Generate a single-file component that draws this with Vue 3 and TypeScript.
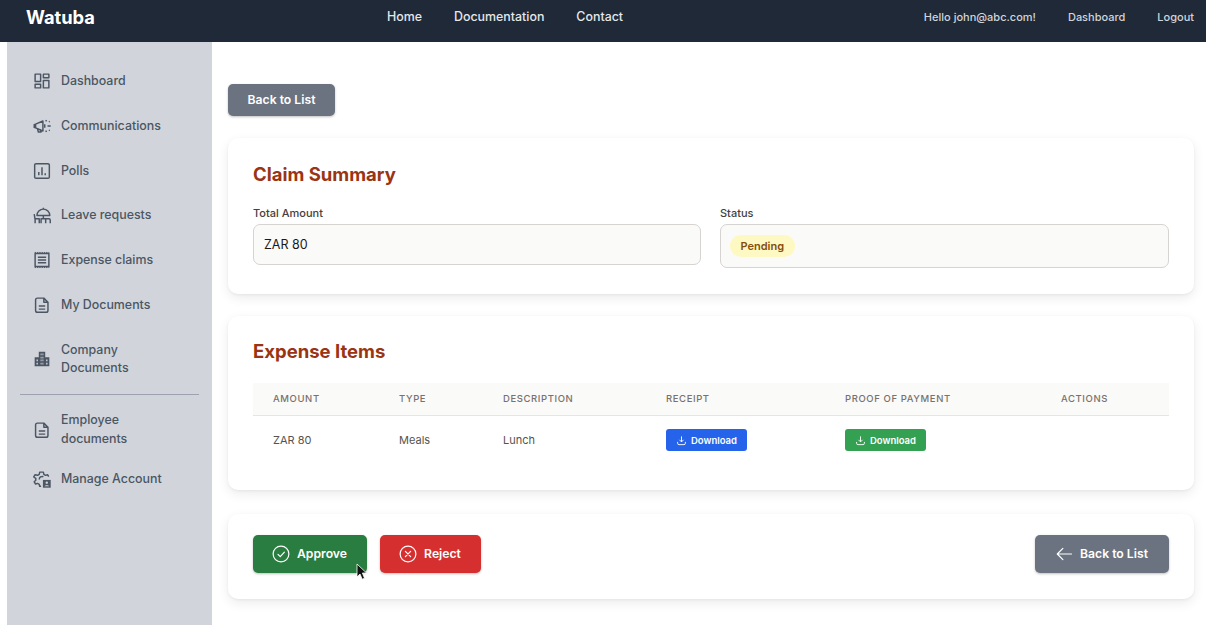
<script setup lang="ts">
const headers: string[] = ['Amount', 'Type', 'Description', 'Receipt', 'Proof of Payment', 'Actions']
</script>

<template>
  <div class="page">
    <header class="topbar">
      <div class="brand">Watuba</div>
      <nav class="mainnav">
        <a>Home</a>
        <a>Documentation</a>
        <a>Contact</a>
      </nav>
      <div class="usernav">
        <span>Hello john@abc.com!</span>
        <a>Dashboard</a>
        <a>Logout</a>
      </div>
    </header>

    <div class="body">
      <aside class="sidebar">
        <a class="item">
          <svg class="ico" viewBox="0 0 24 24"><path d="M4.500 4.500h6v8h-6zM4.500 15.500h6v4h-6zM13.500 4.500h6v4h-6zM13.500 11.500h6v8h-6z" /></svg>
          <span>Dashboard</span>
        </a>
        <a class="item">
          <svg class="ico" viewBox="0 0 24 24"><path d="M3.500 10.500v3l1.500.5v-4zM5 10l8-3.500v11L5 14zM7 14.500l1 4h3l-1-3" /><path d="M15 10v4M17 5.500l-1 1.500M18 12h3.500M17 18.500l-1-1.500M20.500 7l-1 .5M20.500 17l-1-.5" /></svg>
          <span>Communications</span>
        </a>
        <a class="item">
          <svg class="ico" viewBox="0 0 24 24"><rect x="4" y="4" width="16" height="16" rx="1.500" /><path d="M8.500 16.500v-3.500M12 16.500V8M15.500 16.500v-2" /></svg>
          <span>Polls</span>
        </a>
        <a class="item">
          <svg class="ico" viewBox="0 0 24 24"><path d="M6.500 11.500a7 7 0 0 1 14 0zM13.500 3v1.500M13.500 11.500v3" /><path d="M3.500 10l1 6v4M4.500 15h4.500v5M11 20v-5h7M18 15h1.500a1.500 1.500 0 0 1 1.500 1.500V20M16 15v5" /></svg>
          <span>Leave requests</span>
        </a>
        <a class="item">
          <svg class="ico" viewBox="0 0 24 24"><path d="M4.500 5h15v14h-15zM7.500 9h9M7.500 12h9M7.500 15h9" /><path class="dash" d="M4 3.800h16M4 20.200h16" /></svg>
          <span>Expense claims</span>
        </a>
        <a class="item">
          <svg class="ico" viewBox="0 0 24 24"><path d="M7 4.500h7l4.500 4.500v9a2 2 0 0 1-2 2H7a2 2 0 0 1-2-2V6.500a2 2 0 0 1 2-2zM14 4.500V9h4.500M8.500 13h7M8.500 16.500h7" /></svg>
          <span>My Documents</span>
        </a>
        <a class="item">
          <svg class="ico" viewBox="0 0 24 24"><path class="solid" d="M8.500 4h7v6h4.500v10H4V10h4.500zM10.500 6v2h1v-2zM12.500 6v2h1v-2zM10.500 9.500v2h1v-2zM12.500 9.500v2h1v-2zM6 12.500v2h1.500v-2zM10.500 12.500v2h1v-2zM12.500 12.500v2h1v-2zM16.500 12.500v2H18v-2zM6 16v2h1.500v-2zM10.500 16v2h1v-2zM12.500 16v2h1v-2zM16.500 16v2H18v-2z" /></svg>
          <span>Company<br />Documents</span>
        </a>
        <div class="divider"></div>
        <a class="item low">
          <svg class="ico" viewBox="0 0 24 24"><path d="M7 4.500h7l4.500 4.500v9a2 2 0 0 1-2 2H7a2 2 0 0 1-2-2V6.500a2 2 0 0 1 2-2zM14 4.500V9h4.500M8.500 13h7M8.500 16.500h7" /></svg>
          <span>Employee<br />documents</span>
        </a>
        <a class="item low">
          <svg class="ico" viewBox="0 0 24 24"><path d="M11 20H9.500l-.5-2.200-1.800-1-2.200.7-1.500-2.500 1.700-1.600v-2L3 9.800l1.500-2.500 2.700.7 1.800-1 .5-2.500h4l.5 2.500 1.800 1 2.200-.7 1.300 2.200" /><path d="M9 12.500a3.200 3.200 0 0 1 4.500-3" /><path class="solid" d="M13 13h8.500v8.500H13z" /><circle class="hole" cx="17.200" cy="16" r="1.300" /><path class="hole" d="M14.800 20c.4-1.600 4.400-1.600 4.800 0z" /></svg>
          <span>Manage Account</span>
        </a>
      </aside>

      <main class="content">
        <div class="topaction">
          <button class="btn gray top">Back to List</button>
        </div>

        <section class="card summary">
          <h2>Claim Summary</h2>
          <div class="fields">
            <div class="field">
              <label>Total Amount</label>
              <div class="input amount">ZAR 80</div>
            </div>
            <div class="field">
              <label>Status</label>
              <div class="input status"><span class="badge">Pending</span></div>
            </div>
          </div>
        </section>

        <section class="card items">
          <h2>Expense Items</h2>
          <table>
            <thead>
              <tr>
                <th v-for="h in headers" :key="h">{{ h }}</th>
              </tr>
            </thead>
            <tbody>
              <tr>
                <td>ZAR 80</td>
                <td>Meals</td>
                <td>Lunch</td>
                <td>
                  <a class="dl blue">
                    <svg viewBox="0 0 24 24"><path d="M12 3v12M7.500 10.500l4.500 4.500 4.500-4.500M3.500 15v3a3 3 0 0 0 3 3h11a3 3 0 0 0 3-3v-3" /></svg>
                    Download
                  </a>
                </td>
                <td>
                  <a class="dl green">
                    <svg viewBox="0 0 24 24"><path d="M12 3v12M7.500 10.500l4.500 4.500 4.500-4.500M3.500 15v3a3 3 0 0 0 3 3h11a3 3 0 0 0 3-3v-3" /></svg>
                    Download
                  </a>
                </td>
                <td></td>
              </tr>
            </tbody>
          </table>
        </section>

        <section class="card actions">
          <div class="left">
            <button class="btn big approve">
              <svg viewBox="0 0 24 24"><circle cx="12" cy="12" r="10.500" /><path d="M8 12.500l3 3 5.500-6" /></svg>
              Approve
            </button>
            <button class="btn big reject">
              <svg viewBox="0 0 24 24"><circle cx="12" cy="12" r="10.500" /><path d="M8.500 8.500l7 7M15.500 8.500l-7 7" /></svg>
              Reject
            </button>
          </div>
          <button class="btn big gray back">
            <svg viewBox="0 0 24 24"><path d="M22 12H3M10.500 4.500L3 12l7.500 7.500" /></svg>
            Back to List
          </button>
        </section>
      </main>
    </div>

    <svg class="cursor" viewBox="0 0 12 18"><path d="M1 1v13l3-3 2.200 5.200 2.300-1L6.400 10H10.500z" /></svg>
  </div>
</template>

<style>
html, body { margin: 0; background: #fff; }
</style>

<style scoped>
.page {
  position: relative;
  width: 1206px;
  height: 625px;
  overflow: hidden;
  font-family: Inter, "Liberation Sans", sans-serif;
  background: #fff;
}
.topbar {
  height: 42px;
  background: #1f2937;
  display: flex;
  align-items: center;
  padding: 0 12px 8px 26px;
  box-sizing: border-box;
  color: #e5e7eb;
}
.brand {
  width: 361px;
  flex: none;
  color: #fff;
  font-size: 18.300px;
  font-weight: 700;
}
.mainnav {
  display: flex;
  gap: 32px;
  font-size: 12.400px;
  font-weight: 500;
  margin-top: -2px;
}
.usernav {
  margin-left: auto;
  display: flex;
  gap: 32px;
  font-size: 11px;
  font-weight: 500;
  color: #d1d5db;
}
.body {
  display: flex;
  height: 583px;
  padding-left: 7px;
}
.sidebar {
  width: 205px;
  flex: none;
  background: #d1d5db;
  padding: 17px 13px 0 13px;
  box-sizing: border-box;
}
.item {
  display: flex;
  align-items: center;
  gap: 8px;
  padding: 13px 10px 13px 11px;
  font-size: 12.400px;
  line-height: 18.750px;
  font-weight: 500;
  color: #4b5563;
}
.item.low { padding-top: 10.500px; padding-bottom: 10.500px; }
.ico {
  width: 22px;
  height: 22px;
  flex: none;
  margin: -2px 0;
  fill: none;
  stroke: #4b5563;
  stroke-width: 1.600;
  stroke-linejoin: round;
}
.dash { stroke-width: 1; stroke-dasharray: 1.500 1; }
.solid { fill: #4b5563; stroke: none; fill-rule: evenodd; }
.hole { fill: #d1d5db; stroke: none; }
.divider {
  height: 1px;
  background: #9ca3af;
  margin: 2.500px 0 6px;
}
.content {
  flex: 1;
  padding: 42px 12px 0 16px;
  min-width: 0;
}
.topaction { margin-bottom: 22px; display: flex; }
.btn {
  border: 0;
  font-family: inherit;
  color: #fff;
  font-weight: 600;
  font-size: 12.200px;
  border-radius: 5px;
  box-shadow: 0 1px 3px rgba(0, 0, 0, .16), 0 1px 2px rgba(0, 0, 0, .1);
  display: inline-flex;
  align-items: center;
  justify-content: center;
}
.gray { background: #6b7280; }
.top { width: 107px; height: 32px; padding: 0 0 1px; }
.card {
  background: #fff;
  border-radius: 10px;
  box-shadow: 0 4px 12px rgba(0, 0, 0, .08), 0 1px 3px rgba(0, 0, 0, .05);
  padding: 25px;
  box-sizing: border-box;
}
h2 {
  margin: 0;
  color: #9a3412;
  font-size: 18.500px;
  line-height: 24px;
  font-weight: 700;
}
.summary { height: 156px; padding-top: 24px; }
.fields {
  display: grid;
  grid-template-columns: 448px 449px;
  gap: 19px;
  margin-top: 20px;
}
label {
  display: block;
  font-size: 11px;
  line-height: 15px;
  font-weight: 500;
  color: #44403c;
  margin-bottom: 3px;
}
.input {
  background: #fafaf9;
  border: 1px solid #d6d3d1;
  border-radius: 7px;
  box-sizing: border-box;
  display: flex;
  align-items: center;
  padding: 0 10px;
  color: #1c1917;
  font-size: 12.500px;
}
.amount { height: 41px; }
.status { height: 44px; padding-left: 9px; }
.badge {
  background: #fef9c3;
  color: #854d0e;
  font-size: 11px;
  font-weight: 600;
  line-height: 22px;
  padding: 0 10.500px;
  border-radius: 11px;
  margin-top: -1px;
}
.items { margin-top: 22px; height: 174px; padding-top: 23px; }
table {
  width: 100%;
  margin-top: 20px;
  border-collapse: collapse;
  table-layout: fixed;
}
th {
  background: #fafaf9;
  border-bottom: 1px solid #e7e5e4;
  height: 32px;
  padding: 0 20px;
  box-sizing: border-box;
  text-align: left;
  font-size: 9.500px;
  font-weight: 500;
  letter-spacing: .6px;
  text-transform: uppercase;
  color: #78716c;
}
th:nth-child(1) { width: 126px; }
th:nth-child(2) { width: 104px; }
th:nth-child(3) { width: 163px; }
th:nth-child(4) { width: 179px; }
th:nth-child(5) { width: 216px; }
td {
  height: 49px;
  padding: 0 20px;
  font-size: 11px;
  color: #57534e;
}
.dl {
  display: inline-flex;
  align-items: center;
  justify-content: center;
  gap: 4px;
  width: 81px;
  height: 22px;
  border-radius: 3px;
  color: #fff;
  font-size: 9.500px;
  font-weight: 600;
  vertical-align: middle;
}
.dl svg {
  width: 11px;
  height: 11px;
  fill: none;
  stroke: #fff;
  stroke-width: 2;
}
.blue { background: #2563eb; }
.green { background: #33a052; }
.actions {
  margin-top: 24px;
  height: 85px;
  padding: 21px 25px 26px;
  display: flex;
  justify-content: space-between;
  align-items: flex-start;
}
.left { display: flex; gap: 13px; }
.big { height: 38px; gap: 8px; padding: 0 0 1px; }
.big svg {
  width: 18px;
  height: 18px;
  margin: 0 -1px;
  fill: none;
  stroke: #fff;
  stroke-width: 1.600;
  stroke-linecap: round;
  stroke-linejoin: round;
}
.approve { width: 114px; background: #2a7d40; }
.reject { width: 101px; background: #d52f2f; }
.back { width: 134px; }
.cursor {
  position: absolute;
  left: 356px;
  top: 563px;
  width: 12px;
  height: 18px;
}
.cursor path { fill: #111; stroke: #fff; stroke-width: .8; }
</style>
